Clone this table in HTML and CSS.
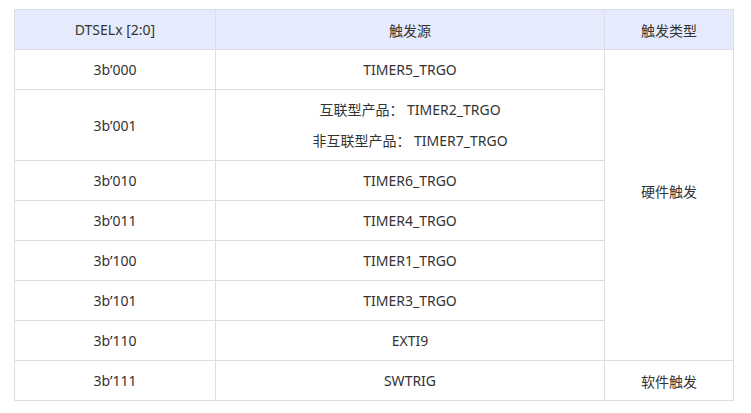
FILE: index.html
```html
<!DOCTYPE html>
<html lang="zh-CN">
<head>
<meta charset="utf-8">
<link rel="stylesheet" href="styles.css">
</head>
<body>
<table class="tbl">
  <colgroup>
    <col class="c1"><col class="c2"><col class="c3">
  </colgroup>
  <thead>
    <tr><th>DTSELx [2:0]</th><th>触发源</th><th>触发类型</th></tr>
  </thead>
  <tbody>
    <tr><td>3b’000</td><td>TIMER5_TRGO</td><td rowspan="7" class="hw">硬件触发</td></tr>
    <tr class="tall"><td>3b’001</td><td><p>互联型产品： TIMER2_TRGO</p><p>非互联型产品： TIMER7_TRGO</p></td></tr>
    <tr><td>3b’010</td><td>TIMER6_TRGO</td></tr>
    <tr><td>3b’011</td><td>TIMER4_TRGO</td></tr>
    <tr><td>3b’100</td><td>TIMER1_TRGO</td></tr>
    <tr><td>3b’101</td><td>TIMER3_TRGO</td></tr>
    <tr><td>3b’110</td><td>EXTI9</td></tr>
    <tr><td>3b’111</td><td>SWTRIG</td><td>软件触发</td></tr>
  </tbody>
</table>
</body>
</html>
```
FILE: styles.css
```css
html, body { margin: 0; padding: 0; background: #fff; }
body { padding: 9px 14px; }
.tbl {
  border-collapse: collapse;
  table-layout: fixed;
  width: 719px;
  font-family: "Noto Sans", "Noto Sans CJK SC", sans-serif;
  font-size: 14px;
  color: #333;
}
.c1 { width: 201px; }
.c2 { width: 389px; }
.c3 { width: 129px; }
.tbl th, .tbl td {
  border: 1px solid #dcdee6;
  text-align: center;
  vertical-align: middle;
  height: 40px;
  padding: 0 8px;
  font-weight: normal;
  box-sizing: border-box;
}
.tbl th { background: #e5ebfc; height: 40px; }
.tbl tr.tall td { height: 71px; }
.tbl td.hw { padding-bottom: 28px; }
.tbl p { margin: 0; line-height: 31px; }
```
